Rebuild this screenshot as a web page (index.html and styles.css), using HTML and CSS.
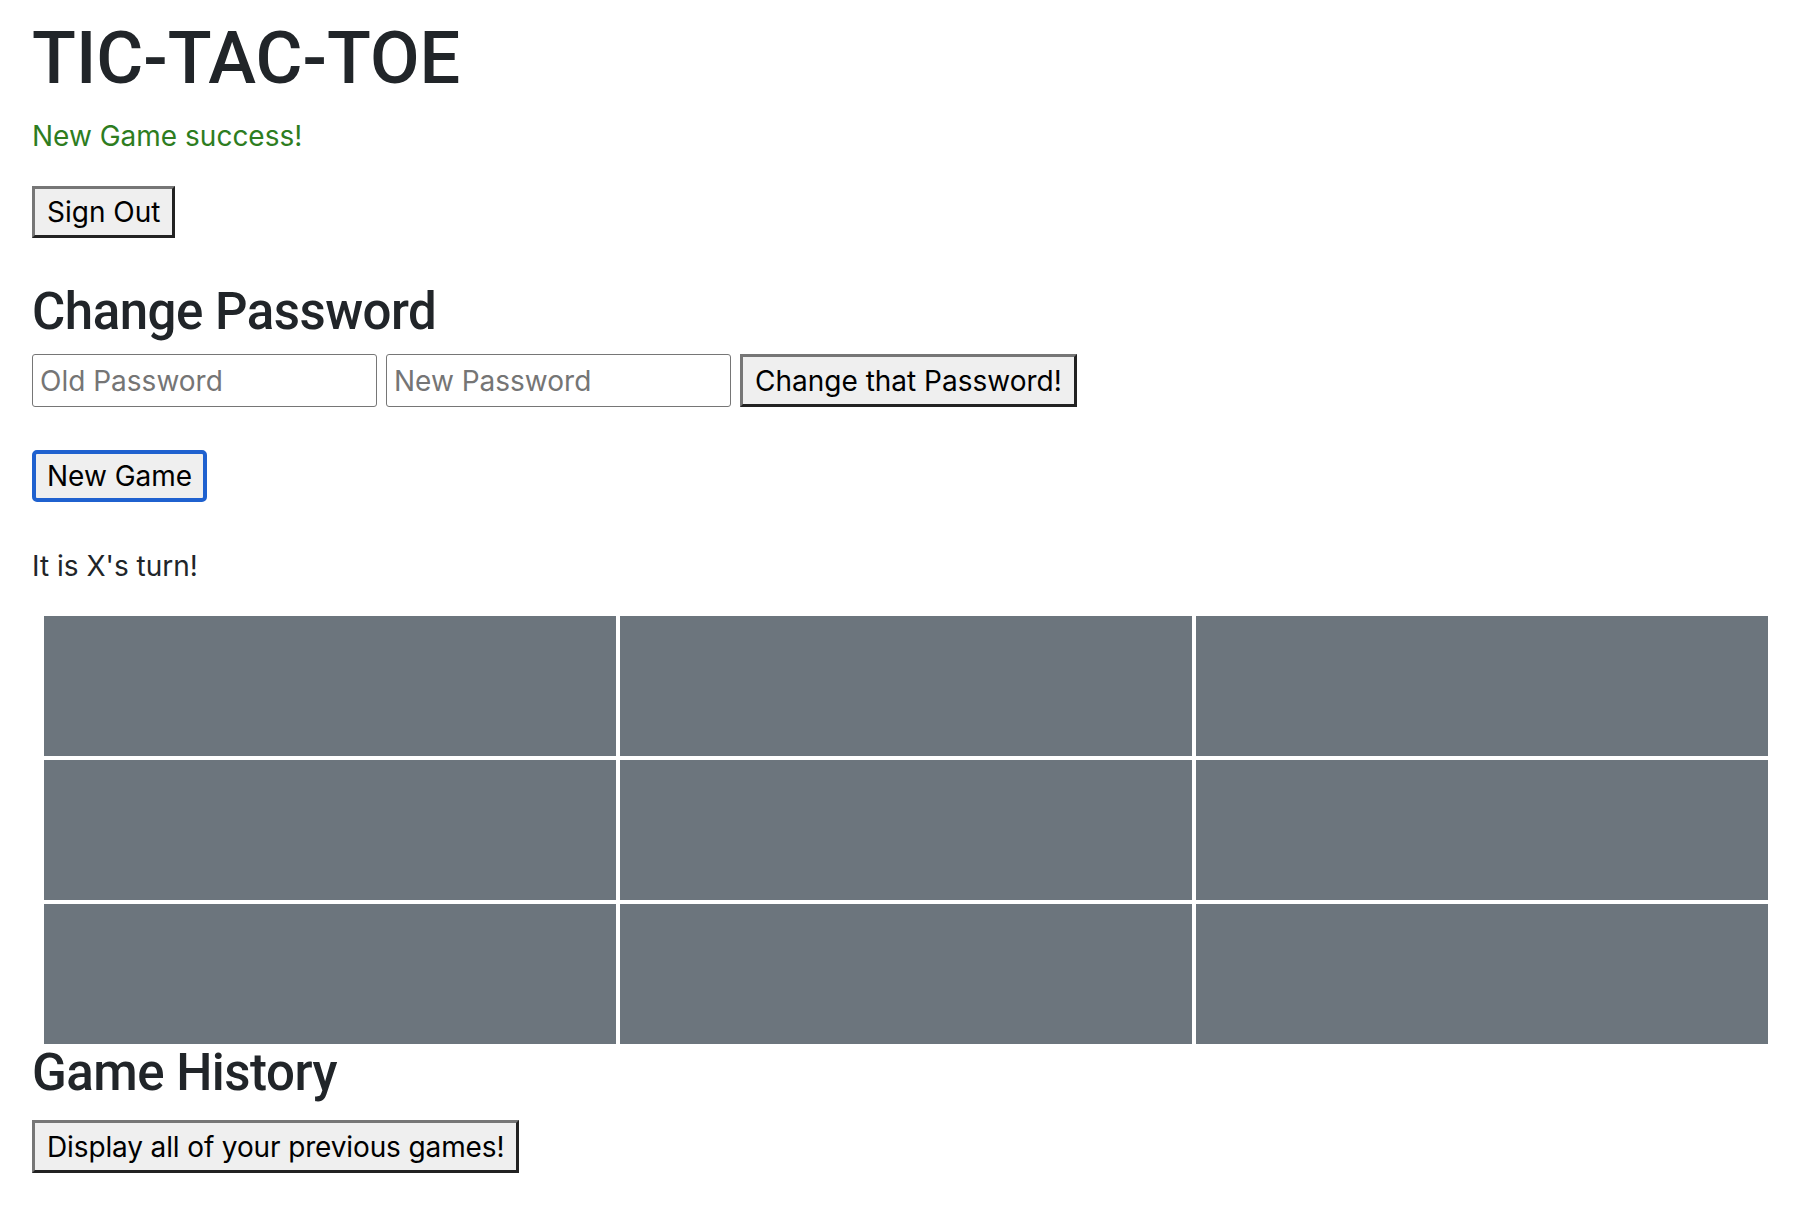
FILE: index.html
```html
<!DOCTYPE html>
<html lang="en">
<head>
<meta charset="utf-8">
<title>TIC-TAC-TOE</title>
<link rel="stylesheet" href="styles.css">
</head>
<body>
  <h1 class="title">TIC-TAC-TOE</h1>
  <p class="message">New Game success!</p>
  <button class="btn btn-signout" type="button">Sign Out</button>

  <h2 class="section-title section-password">Change Password</h2>
  <form class="password-form">
    <input class="field" type="password" placeholder="Old Password">
    <input class="field" type="password" placeholder="New Password">
    <button class="btn btn-change" type="button">Change that Password!</button>
  </form>

  <button class="btn btn-new btn-focused" type="button">New Game</button>

  <p class="turn">It is X's turn!</p>

  <div class="board">
    <div class="cell"></div>
    <div class="cell"></div>
    <div class="cell"></div>
    <div class="cell"></div>
    <div class="cell"></div>
    <div class="cell"></div>
    <div class="cell"></div>
    <div class="cell"></div>
    <div class="cell"></div>
  </div>

  <h2 class="section-title section-history">Game History</h2>
  <button class="btn btn-history" type="button">Display all of your previous games!</button>
</body>
</html>
```
FILE: styles.css
```css
* {
  box-sizing: border-box;
}

html, body {
  background: #ffffff;
}

body {
  margin: 0;
  padding: 0 32px 40px 32px;
  font-family: "Inter", "Liberation Sans", sans-serif;
  color: #212529;
}

.title {
  margin: 16.3px 0 0 0;
  font-family: "Roboto", "Inter", sans-serif;
  font-size: 72px;
  line-height: 86px;
  font-weight: 500;
}

.message {
  margin: 13px 0 0 0;
  font-size: 28px;
  line-height: 42px;
  color: #2e7d1f;
}

.btn {
  display: block;
  font-family: "Inter", "Liberation Sans", sans-serif;
  font-size: 28px;
  line-height: 34px;
  color: #000000;
  background: #efefef;
  border-style: solid;
  border-width: 3px;
  border-color: #767676 #222222 #222222 #767676;
  padding: 6px 12px;
  border-radius: 0;
}

.btn-signout {
  margin-top: 29px;
}

.section-title {
  margin: 0;
  font-family: "Roboto", "Inter", sans-serif;
  font-size: 51px;
  line-height: 56px;
  font-weight: 500;
  letter-spacing: -0.5px;
}

.section-password {
  margin-top: 45.6px;
}

.section-history {
  margin-top: 1px;
}

.password-form {
  display: flex;
  gap: 9px;
  margin: 14.4px 0 0 0;
}

.field {
  width: 345px;
  height: 53px;
  font-family: "Inter", "Liberation Sans", sans-serif;
  font-size: 28px;
  padding: 0 7px;
  border: 1px solid #767676;
  border-radius: 3px;
  color: #000;
}

.field::placeholder {
  color: #757575;
}

.btn-change {
  height: 53px;
  padding: 0 12px;
}

.btn-new {
  margin-top: 43px;
}

.btn-focused {
  border: 4px solid #1f61cf;
  border-radius: 5px;
  padding: 5px 11px;
}

.turn {
  margin: 43px 0 0 0;
  font-size: 28px;
  line-height: 42px;
}

.board {
  display: grid;
  grid-template-columns: repeat(3, 1fr);
  grid-auto-rows: 140px;
  gap: 4px;
  margin: 29px 8px 0 12px;
}

.cell {
  background: #6c757d;
}

.btn-history {
  margin-top: 19px;
  height: 53px;
  padding: 0 12px;
  letter-spacing: -0.13px;
}
```
